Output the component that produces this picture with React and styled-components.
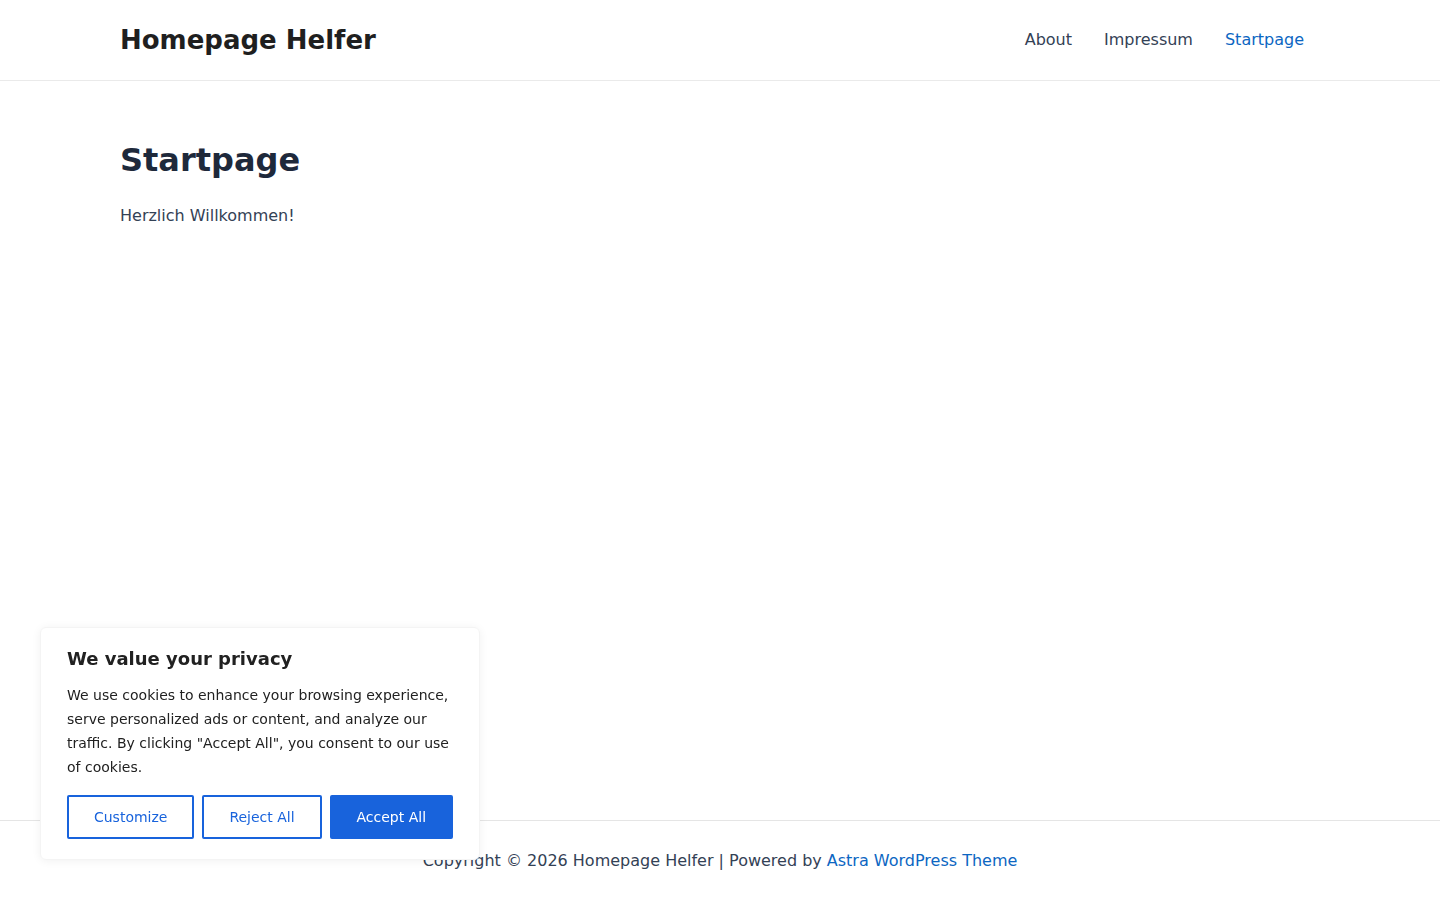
import React from 'react';
import styled, { createGlobalStyle } from 'styled-components';

const GlobalStyle = createGlobalStyle`
  * { box-sizing: border-box; }
  html, body { margin: 0; padding: 0; }
  body {
    font-family: "DejaVu Sans", "Liberation Sans", sans-serif;
    color: #334155;
    background: #fff;
    font-size: 16px;
  }
  #root { min-height: 100vh; }
`;

const Page = styled.div`
  min-height: 100vh;
  display: flex;
  flex-direction: column;
`;

const Header = styled.header`
  border-bottom: 1px solid #eaeaea;
`;

const Container = styled.div`
  width: 1200px;
  margin: 0 auto;
`;

const HeaderRow = styled(Container)`
  height: 80px;
  display: flex;
  align-items: center;
  justify-content: space-between;
`;

const SiteTitle = styled.a`
  font-size: 26px;
  font-weight: 700;
  color: #1f1f1f;
  text-decoration: none;
  line-height: 1;
`;

const Nav = styled.nav`
  display: flex;
  align-items: center;
`;

const NavLink = styled.a`
  padding: 0 16px;
  font-size: 16px;
  line-height: 80px;
  color: ${({ $active }) => ($active ? '#0c66c2' : '#334155')};
  text-decoration: none;
`;

const Main = styled.main`
  flex: 1;
`;

const Article = styled(Container)`
  padding-top: 60px;
`;

const Title = styled.h1`
  margin: 0 0 24px;
  font-size: 32px;
  line-height: 1.2;
  font-weight: 700;
  color: #1e293b;
`;

const Text = styled.p`
  margin: 0;
  font-size: 16px;
  line-height: 1.6;
  color: #334155;
`;

const Footer = styled.footer`
  border-top: 1px solid #e5e5e5;
  height: 80px;
  display: flex;
  align-items: center;
  justify-content: center;
  font-size: 16px;
  color: #334155;
`;

const FooterLink = styled.a`
  color: #0c66c2;
  text-decoration: none;
  margin-left: 5px;
`;

const Banner = styled.div`
  position: fixed;
  left: 40px;
  bottom: 40px;
  width: 440px;
  background: #fff;
  border: 1px solid #f4f4f4;
  border-radius: 6px;
  box-shadow: 0 1px 10px rgba(0, 0, 0, 0.06);
  padding: 18px 26px 20px;
  color: #212121;
`;

const BannerTitle = styled.h2`
  margin: 0 0 12px;
  font-size: 18px;
  font-weight: 700;
  line-height: 1.4;
  color: #212121;
`;

const BannerText = styled.p`
  margin: 0 0 16px;
  font-size: 14px;
  line-height: 24px;
  color: #212121;
`;

const Buttons = styled.div`
  display: flex;
  gap: 8px;
`;

const Button = styled.button`
  flex: 1 1 auto;
  height: 44px;
  padding: 0 8px;
  white-space: nowrap;
  font-family: inherit;
  font-size: 14px;
  border: 2px solid #1863dc;
  border-radius: 2px;
  background: ${({ $primary }) => ($primary ? '#1863dc' : '#fff')};
  color: ${({ $primary }) => ($primary ? '#fff' : '#1863dc')};
  cursor: pointer;
`;

export default function App() {
  return (
    <>
      <GlobalStyle />
      <Page>
        <Header>
          <HeaderRow>
            <SiteTitle href="#">Homepage Helfer</SiteTitle>
            <Nav>
              <NavLink href="#">About</NavLink>
              <NavLink href="#">Impressum</NavLink>
              <NavLink href="#" $active>Startpage</NavLink>
            </Nav>
          </HeaderRow>
        </Header>
        <Main>
          <Article>
            <Title>Startpage</Title>
            <Text>Herzlich Willkommen!</Text>
          </Article>
        </Main>
        <Footer>
          Copyright © 2026 Homepage Helfer | Powered by
          <FooterLink href="#">Astra WordPress Theme</FooterLink>
        </Footer>
      </Page>
      <Banner>
        <BannerTitle>We value your privacy</BannerTitle>
        <BannerText>
          We use cookies to enhance your browsing experience, serve personalized ads or content, and analyze our traffic. By clicking "Accept All", you consent to our use of cookies.
        </BannerText>
        <Buttons>
          <Button>Customize</Button>
          <Button>Reject All</Button>
          <Button $primary>Accept All</Button>
        </Buttons>
      </Banner>
    </>
  );
}
